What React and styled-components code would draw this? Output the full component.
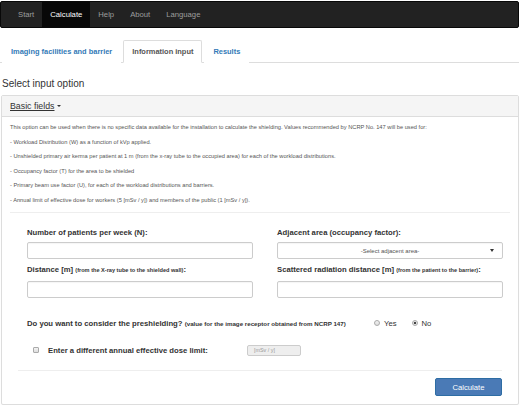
import styled, { createGlobalStyle } from "styled-components";

const GlobalStyle = createGlobalStyle`
  html, body {
    margin: 0;
    padding: 0;
    background: #ffffff;
  }
  body {
    font-family: "Liberation Sans", Arial, sans-serif;
    color: #333;
  }
`;

const Page = styled.div`
  width: 520px;
  display: flex;
  flex-direction: column;
`;

// Top navigation bar
const Navbar = styled.nav`
  margin: 1px 1px 0 0;
  height: 27px;
  background: #222;
  border: 1px solid #080808;
  border-radius: 2px;
  box-sizing: border-box;
  display: flex;
  padding-left: 9px;
`;

const NavItem = styled.a`
  display: flex;
  align-items: center;
  padding: 0 8px;
  font-size: 7.7px;
  color: ${(p) => (p.active ? "#fff" : "#9d9d9d")};
  background: ${(p) => (p.active ? "#080808" : "transparent")};
`;

// Tabs
const Tabs = styled.ul`
  list-style: none;
  margin: 12px 1px 0 0;
  padding: 0 0 0 2px;
  display: flex;
  gap: 2px;
  border-bottom: 1px solid #ddd;
`;

const Tab = styled.li`
  height: 23px;
  box-sizing: border-box;
  padding: 0 8px;
  display: flex;
  align-items: center;
  font-size: 7.45px;
  font-weight: bold;
  margin-bottom: -1px;
  border: 1px solid ${(p) => (p.active ? "#ddd" : "transparent")};
  border-bottom-color: ${(p) => (p.active ? "#fff" : "transparent")};
  border-radius: 2px 2px 0 0;
  background: #fff;
  color: ${(p) => (p.active ? "#555" : "#337ab7")};
`;

const Title = styled.h4`
  margin: 15px 0 0 2px;
  font-size: 10px;
  line-height: 12px;
  font-weight: normal;
  color: #333;
`;

// Panel
const Panel = styled.section`
  margin: 5px 1px 0 1px;
  border: 1px solid #ddd;
  border-radius: 2px;
  box-shadow: 0 1px 1px rgba(0, 0, 0, 0.05);
`;

const PanelHeading = styled.div`
  background: #f5f5f5;
  border-bottom: 1px solid #ddd;
  height: 20px;
  padding: 0 8px;
  display: flex;
  align-items: center;
`;

const Toggle = styled.span`
  font-size: 8.8px;
  color: #333;
  text-decoration: underline;
  display: flex;
  align-items: center;
`;

const Caret = styled.span`
  display: inline-block;
  margin-left: 2px;
  border-top: 2.5px solid #333;
  border-left: 2px solid transparent;
  border-right: 2px solid transparent;
`;

const PanelBody = styled.div`
  padding: 6px 8px 8px 8px;
`;

const Note = styled.p`
  margin: 0 0 5.1px 0;
  font-size: 5.7px;
  line-height: 9.5px;
  color: #555;
`;

const Rule = styled.hr`
  border: 0;
  border-top: 1px solid #eee;
  margin: ${(p) => p.margin};
`;

const FieldGrid = styled.div`
  display: grid;
  grid-template-columns: 226px 226px;
  column-gap: 24px;
  margin: 0 8px 0 17px;
`;

const Field = styled.div`
  display: flex;
  flex-direction: column;
  margin-bottom: 5px;
`;

const Label = styled.label`
  font-size: 7.7px;
  line-height: 11px;
  font-weight: bold;
  color: #333;
  margin-bottom: ${(p) => p.gap || "4px"};
`;

const Hint = styled.span`
  font-size: ${(p) => p.size || "5.6px"};
`;

const Input = styled.div`
  height: 17px;
  box-sizing: border-box;
  border: 1px solid #ccc;
  border-radius: 2px;
  background: #fff;
  box-shadow: inset 0 1px 1px rgba(0, 0, 0, 0.04);
`;

const Select = styled(Input)`
  display: flex;
  align-items: center;
  justify-content: center;
  position: relative;
  font-size: 6px;
  color: #555;
`;

const SelectArrow = styled.span`
  position: absolute;
  right: 8px;
  top: 6px;
  border-top: 3px solid #333;
  border-left: 2px solid transparent;
  border-right: 2px solid transparent;
`;

const QuestionRow = styled.div`
  display: flex;
  align-items: center;
  margin: 14px 0 0 17px;
  height: 12px;
`;

const Question = styled.span`
  width: 347px;
  font-size: 7.7px;
  font-weight: bold;
`;

const RadioOption = styled.span`
  display: flex;
  align-items: center;
  gap: 4px;
  margin-right: 15px;
  font-size: 7.7px;
  color: #333;
`;

const RadioDot = styled.span`
  width: 6px;
  height: 6px;
  box-sizing: border-box;
  border-radius: 50%;
  border: 1px solid #aaa;
  background: ${(p) =>
    p.checked
      ? "radial-gradient(circle, #444 0 1.3px, #eee 1.6px)"
      : "linear-gradient(#f3f3f3, #ddd)"};
`;

const CheckRow = styled.div`
  display: flex;
  align-items: center;
  margin: 15px 0 0 23px;
  height: 12px;
`;

const CheckBox = styled.span`
  width: 6px;
  height: 6px;
  box-sizing: border-box;
  border: 1px solid #aaa;
  border-radius: 1px;
  background: linear-gradient(#f3f3f3, #ddd);
  margin-right: 9px;
`;

const CheckLabel = styled.span`
  font-size: 7.7px;
  font-weight: bold;
  width: 199px;
`;

const SmallInput = styled.div`
  width: 54px;
  height: 11px;
  box-sizing: border-box;
  border: 1px solid #ccc;
  border-radius: 2px;
  background: #eee;
  font-size: 5.4px;
  color: #999;
  display: flex;
  align-items: center;
  padding-left: 6px;
`;

const Footer = styled.div`
  display: flex;
  justify-content: flex-end;
  margin-right: 8px;
`;

const Button = styled.button`
  width: 67px;
  height: 18px;
  padding: 0;
  border: 1px solid #2e6da4;
  border-radius: 2px;
  background: #4a7ab6;
  color: #fff;
  font-family: "Liberation Sans", Arial, sans-serif;
  font-size: 7.7px;
`;

const notes = [
  "This option can be used when there is no specific data available for the installation to calculate the shielding. Values recommended by NCRP No. 147 will be used for:",
  "- Workload Distribution (W) as a function of kVp applied.",
  "- Unshielded primary air kerma per patient at 1 m (from the x-ray tube to the occupied area) for each of the workload distributions.",
  "- Occupancy factor (T) for the area to be shielded",
  "- Primary beam use factor (U), for each of the workload distributions and barriers.",
  "- Annual limit of effective dose for workers (5 [mSv / y]) and members of the public (1 [mSv / y]).",
];

const App = () => {
  return (
    <Page>
      <GlobalStyle />
      <Navbar>
        <NavItem>Start</NavItem>
        <NavItem active>Calculate</NavItem>
        <NavItem>Help</NavItem>
        <NavItem>About</NavItem>
        <NavItem>Language</NavItem>
      </Navbar>

      <Tabs>
        <Tab>Imaging facilities and barrier</Tab>
        <Tab active>Information input</Tab>
        <Tab>Results</Tab>
      </Tabs>

      <Title>Select input option</Title>

      <Panel>
        <PanelHeading>
          <Toggle>
            Basic fields
            <Caret />
          </Toggle>
        </PanelHeading>
        <PanelBody>
          {notes.map((n) => (
            <Note key={n}>{n}</Note>
          ))}
          <Rule margin="7px 0 14px 0" />

          <FieldGrid>
            <Field>
              <Label>Number of patients per week (N):</Label>
              <Input />
            </Field>
            <Field>
              <Label>Adjacent area (occupancy factor):</Label>
              <Select>
                -Select adjacent area-
                <SelectArrow />
              </Select>
            </Field>
            <Field>
              <Label gap="5px">
                Distance [m] <Hint>(from the X-ray tube to the shielded wall)</Hint>:
              </Label>
              <Input />
            </Field>
            <Field>
              <Label gap="5px">
                Scattered radiation distance [m] <Hint>(from the patient to the barrier)</Hint>:
              </Label>
              <Input />
            </Field>
          </FieldGrid>

          <QuestionRow>
            <Question>
              Do you want to consider the preshielding?{" "}
              <Hint size="6.2px">(value for the image receptor obtained from NCRP 147)</Hint>
            </Question>
            <RadioOption>
              <RadioDot />
              Yes
            </RadioOption>
            <RadioOption>
              <RadioDot checked />
              No
            </RadioOption>
          </QuestionRow>

          <CheckRow>
            <CheckBox />
            <CheckLabel>Enter a different annual effective dose limit:</CheckLabel>
            <SmallInput>[mSv / y]</SmallInput>
          </CheckRow>

          <Rule margin="14px 8px 7px 8px" />

          <Footer>
            <Button>Calculate</Button>
          </Footer>
        </PanelBody>
      </Panel>
    </Page>
  );
};

export default App;
